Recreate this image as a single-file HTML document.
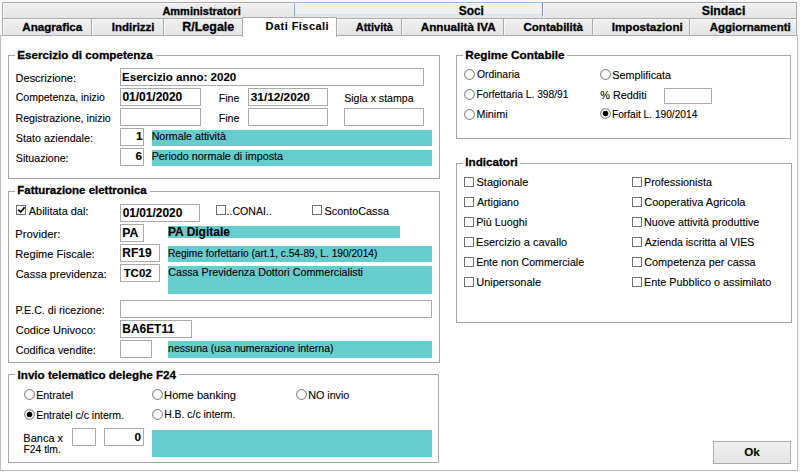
<!DOCTYPE html>
<html><head><meta charset="utf-8"><style>
html,body{margin:0;padding:0}
body{width:800px;height:472px;position:relative;overflow:hidden;background:#f8f8f8;font-family:"Liberation Sans",sans-serif;color:#000}
body>div, body>svg{position:absolute}
.t{position:absolute;white-space:nowrap;line-height:14px;font-family:"Liberation Sans",sans-serif}
.h{-webkit-text-stroke:0.3px #000}
.b{-webkit-text-stroke:0.1px #000}
.r{-webkit-text-stroke:0.1px #000}
</style></head><body>
<div style="left:0px;top:35px;width:798px;height:436px;box-sizing:border-box;border:1px solid #bdbdbd;background:#fff"></div>
<div style="left:2px;top:2px;width:293px;height:17px;box-sizing:border-box;border:1px solid #acacac;background:linear-gradient(#f0f0f0,#e5e5e5);box-shadow:inset 1px 1px 0 #f8f8f8"></div>
<div style="left:542px;top:2px;width:255px;height:17px;box-sizing:border-box;border:1px solid #acacac;background:linear-gradient(#f0f0f0,#e5e5e5);box-shadow:inset 1px 1px 0 #f8f8f8"></div>
<div style="left:294px;top:2px;width:249px;height:16px;box-sizing:border-box;border:1px solid #8fbfee;border-left-color:#7eb4ea;border-right-color:#8a8ad6;border-bottom:3px solid #e6e6e6;background:#efefef;box-shadow:inset 0 1px 0 #fff, inset 0 -1px 0 #cfe5f9"></div>
<div style="left:2px;top:18px;width:90px;height:18px;box-sizing:border-box;border:1px solid #acacac;background:linear-gradient(#f0f0f0,#e5e5e5);box-shadow:inset 1px 1px 0 #f8f8f8"></div>
<div style="left:91px;top:18px;width:73px;height:18px;box-sizing:border-box;border:1px solid #acacac;background:linear-gradient(#f0f0f0,#e5e5e5);box-shadow:inset 1px 1px 0 #f8f8f8"></div>
<div style="left:163px;top:18px;width:80px;height:18px;box-sizing:border-box;border:1px solid #acacac;background:linear-gradient(#f0f0f0,#e5e5e5);box-shadow:inset 1px 1px 0 #f8f8f8"></div>
<div style="left:336px;top:18px;width:66px;height:18px;box-sizing:border-box;border:1px solid #acacac;background:linear-gradient(#f0f0f0,#e5e5e5);box-shadow:inset 1px 1px 0 #f8f8f8"></div>
<div style="left:401px;top:18px;width:103px;height:18px;box-sizing:border-box;border:1px solid #acacac;background:linear-gradient(#f0f0f0,#e5e5e5);box-shadow:inset 1px 1px 0 #f8f8f8"></div>
<div style="left:503px;top:18px;width:90px;height:18px;box-sizing:border-box;border:1px solid #acacac;background:linear-gradient(#f0f0f0,#e5e5e5);box-shadow:inset 1px 1px 0 #f8f8f8"></div>
<div style="left:592px;top:18px;width:98px;height:18px;box-sizing:border-box;border:1px solid #acacac;background:linear-gradient(#f0f0f0,#e5e5e5);box-shadow:inset 1px 1px 0 #f8f8f8"></div>
<div style="left:689px;top:18px;width:108px;height:18px;box-sizing:border-box;border:1px solid #acacac;background:linear-gradient(#f0f0f0,#e5e5e5);box-shadow:inset 1px 1px 0 #f8f8f8"></div>
<div style="left:242px;top:17px;width:95px;height:20px;box-sizing:border-box;border:1px solid #acacac;border-bottom:none;background:#fff"></div>
<div style="left:8px;top:55px;width:432px;height:124px;box-sizing:border-box;border:1px solid #a8a8a8"></div>
<div style="left:15px;top:54px;width:141px;height:3px;background:#fff"></div>
<div style="left:120px;top:68px;width:304px;height:18px;box-sizing:border-box;border:1px solid #ababab;background:#fff"></div>
<div style="left:120px;top:88px;width:81px;height:18px;box-sizing:border-box;border:1px solid #ababab;background:#fff"></div>
<div style="left:248px;top:88px;width:80px;height:18px;box-sizing:border-box;border:1px solid #ababab;background:#fff"></div>
<div style="left:120px;top:108px;width:81px;height:18px;box-sizing:border-box;border:1px solid #ababab;background:#fff"></div>
<div style="left:248px;top:108px;width:80px;height:18px;box-sizing:border-box;border:1px solid #ababab;background:#fff"></div>
<div style="left:344px;top:108px;width:80px;height:18px;box-sizing:border-box;border:1px solid #ababab;background:#fff"></div>
<div style="left:120px;top:128px;width:24px;height:18px;box-sizing:border-box;border:1px solid #ababab;background:#fff"></div>
<div style="left:152px;top:130px;width:280px;height:16px;background:#66cccc"></div>
<div style="left:120px;top:148px;width:24px;height:18px;box-sizing:border-box;border:1px solid #ababab;background:#fff"></div>
<div style="left:152px;top:150px;width:280px;height:16px;background:#66cccc"></div>
<div style="left:8px;top:191px;width:432px;height:172px;box-sizing:border-box;border:1px solid #a8a8a8"></div>
<div style="left:15px;top:190px;width:135px;height:3px;background:#fff"></div>
<div style="left:16px;top:205px;width:10px;height:10px;box-sizing:border-box;border:1px solid #707070;background:#fff"><svg width="11" height="11" style="position:absolute;left:-1px;top:-1px"><path d="M2.3 4.6 L4.8 7.0 L8.6 2.3" stroke="#000" stroke-width="1.7" fill="none"/></svg></div>
<div style="left:120px;top:204px;width:80px;height:18px;box-sizing:border-box;border:1px solid #ababab;background:#fff"></div>
<div style="left:216px;top:205px;width:10px;height:10px;box-sizing:border-box;border:1px solid #707070;background:#fff"></div>
<div style="left:312px;top:205px;width:10px;height:10px;box-sizing:border-box;border:1px solid #707070;background:#fff"></div>
<div style="left:120px;top:224px;width:24px;height:18px;box-sizing:border-box;border:1px solid #ababab;background:#fff"></div>
<div style="left:168px;top:226px;width:232px;height:12px;background:#66cccc"></div>
<div style="left:120px;top:244px;width:40px;height:18px;box-sizing:border-box;border:1px solid #ababab;background:#fff"></div>
<div style="left:168px;top:246px;width:264px;height:16px;background:#66cccc"></div>
<div style="left:120px;top:264px;width:40px;height:18px;box-sizing:border-box;border:1px solid #ababab;background:#fff"></div>
<div style="left:168px;top:266px;width:264px;height:28px;background:#66cccc"></div>
<div style="left:120px;top:300px;width:312px;height:18px;box-sizing:border-box;border:1px solid #ababab;background:#fff"></div>
<div style="left:120px;top:320px;width:72px;height:18px;box-sizing:border-box;border:1px solid #ababab;background:#fff"></div>
<div style="left:120px;top:340px;width:32px;height:18px;box-sizing:border-box;border:1px solid #ababab;background:#fff"></div>
<div style="left:168px;top:341px;width:264px;height:17px;background:#66cccc"></div>
<div style="left:8px;top:374px;width:431px;height:89px;box-sizing:border-box;border:1px solid #a8a8a8"></div>
<div style="left:15px;top:373px;width:164px;height:3px;background:#fff"></div>
<svg style="left:24px;top:389px;position:absolute" width="11" height="11"><circle cx="5.5" cy="5.5" r="4.9" stroke="#6e6e6e" stroke-width="1" fill="#fff"/></svg>
<svg style="left:152px;top:389px;position:absolute" width="11" height="11"><circle cx="5.5" cy="5.5" r="4.9" stroke="#6e6e6e" stroke-width="1" fill="#fff"/></svg>
<svg style="left:296px;top:389px;position:absolute" width="11" height="11"><circle cx="5.5" cy="5.5" r="4.9" stroke="#6e6e6e" stroke-width="1" fill="#fff"/></svg>
<svg style="left:24px;top:409px;position:absolute" width="11" height="11"><circle cx="5.5" cy="5.5" r="4.9" stroke="#6e6e6e" stroke-width="1" fill="#fff"/><circle cx="5.5" cy="5.5" r="2.8" fill="#000"/></svg>
<svg style="left:152px;top:409px;position:absolute" width="11" height="11"><circle cx="5.5" cy="5.5" r="4.9" stroke="#6e6e6e" stroke-width="1" fill="#fff"/></svg>
<div style="left:72px;top:428px;width:24px;height:18px;box-sizing:border-box;border:1px solid #ababab;background:#fff"></div>
<div style="left:104px;top:428px;width:40px;height:18px;box-sizing:border-box;border:1px solid #ababab;background:#fff"></div>
<div style="left:152px;top:430px;width:280px;height:27px;background:#66cccc"></div>
<div style="left:456px;top:55px;width:335px;height:84px;box-sizing:border-box;border:1px solid #a8a8a8"></div>
<div style="left:463px;top:54px;width:104px;height:3px;background:#fff"></div>
<svg style="left:464px;top:69px;position:absolute" width="11" height="11"><circle cx="5.5" cy="5.5" r="4.9" stroke="#6e6e6e" stroke-width="1" fill="#fff"/></svg>
<svg style="left:600px;top:69px;position:absolute" width="11" height="11"><circle cx="5.5" cy="5.5" r="4.9" stroke="#6e6e6e" stroke-width="1" fill="#fff"/></svg>
<svg style="left:464px;top:89px;position:absolute" width="11" height="11"><circle cx="5.5" cy="5.5" r="4.9" stroke="#6e6e6e" stroke-width="1" fill="#fff"/></svg>
<div style="left:664px;top:88px;width:48px;height:16px;box-sizing:border-box;border:1px solid #ababab;background:#fff"></div>
<svg style="left:464px;top:109px;position:absolute" width="11" height="11"><circle cx="5.5" cy="5.5" r="4.9" stroke="#6e6e6e" stroke-width="1" fill="#fff"/></svg>
<svg style="left:600px;top:108px;position:absolute" width="11" height="11"><circle cx="5.5" cy="5.5" r="4.9" stroke="#6e6e6e" stroke-width="1" fill="#fff"/><circle cx="5.5" cy="5.5" r="2.8" fill="#000"/></svg>
<div style="left:456px;top:163px;width:336px;height:160px;box-sizing:border-box;border:1px solid #a8a8a8"></div>
<div style="left:463px;top:162px;width:57px;height:3px;background:#fff"></div>
<div style="left:464px;top:177px;width:10px;height:10px;box-sizing:border-box;border:1px solid #707070;background:#fff"></div>
<div style="left:632px;top:177px;width:10px;height:10px;box-sizing:border-box;border:1px solid #707070;background:#fff"></div>
<div style="left:464px;top:197px;width:10px;height:10px;box-sizing:border-box;border:1px solid #707070;background:#fff"></div>
<div style="left:632px;top:197px;width:10px;height:10px;box-sizing:border-box;border:1px solid #707070;background:#fff"></div>
<div style="left:464px;top:217px;width:10px;height:10px;box-sizing:border-box;border:1px solid #707070;background:#fff"></div>
<div style="left:632px;top:217px;width:10px;height:10px;box-sizing:border-box;border:1px solid #707070;background:#fff"></div>
<div style="left:464px;top:237px;width:10px;height:10px;box-sizing:border-box;border:1px solid #707070;background:#fff"></div>
<div style="left:632px;top:237px;width:10px;height:10px;box-sizing:border-box;border:1px solid #707070;background:#fff"></div>
<div style="left:464px;top:257px;width:10px;height:10px;box-sizing:border-box;border:1px solid #707070;background:#fff"></div>
<div style="left:632px;top:257px;width:10px;height:10px;box-sizing:border-box;border:1px solid #707070;background:#fff"></div>
<div style="left:464px;top:277px;width:10px;height:10px;box-sizing:border-box;border:1px solid #707070;background:#fff"></div>
<div style="left:632px;top:277px;width:10px;height:10px;box-sizing:border-box;border:1px solid #707070;background:#fff"></div>
<div style="left:713px;top:441px;width:78px;height:23px;box-sizing:border-box;border:1px solid #adadad;background:linear-gradient(#f0f0f0,#e5e5e5)"></div>
<div class="t h" style="left:162.38px;top:4px;font-weight:bold;font-size:11.02px;letter-spacing:0px">Amministratori</div>
<div class="t h" style="left:701.75px;top:4px;font-weight:bold;font-size:12.25px;letter-spacing:0px">Sindaci</div>
<div class="t h" style="left:458.76px;top:4px;font-weight:bold;font-size:11.86px;letter-spacing:0px">Soci</div>
<div class="t h" style="left:22.27px;top:20px;font-weight:bold;font-size:11.62px;letter-spacing:0px">Anagrafica</div>
<div class="t h" style="left:111.81px;top:20px;font-weight:bold;font-size:11.48px;letter-spacing:0px">Indirizzi</div>
<div class="t h" style="left:182.25px;top:20px;font-weight:bold;font-size:12.49px;letter-spacing:0px">R/Legale</div>
<div class="t h" style="left:355.78px;top:20px;font-weight:bold;font-size:10.97px;letter-spacing:0px">Attività</div>
<div class="t h" style="left:420.77px;top:20px;font-weight:bold;font-size:11.67px;letter-spacing:0px">Annualità IVA</div>
<div class="t h" style="left:523.54px;top:20px;font-weight:bold;font-size:11.50px;letter-spacing:0px">Contabilità</div>
<div class="t h" style="left:611.80px;top:20px;font-weight:bold;font-size:11.62px;letter-spacing:0px">Impostazioni</div>
<div class="t h" style="left:709.77px;top:20px;font-weight:bold;font-size:11.48px;letter-spacing:0px">Aggiornamenti</div>
<div class="t b" style="left:265.59px;top:19px;font-weight:bold;font-size:11.00px;letter-spacing:0.45px">Dati Fiscali</div>
<div class="t h" style="left:17.30px;top:48px;font-weight:bold;font-size:11.67px;letter-spacing:0px">Esercizio di competenza</div>
<div class="t r" style="left:15.62px;top:71px;font-weight:normal;font-size:10.97px;letter-spacing:0px">Descrizione:</div>
<div class="t b" style="left:122.06px;top:70px;font-weight:bold;font-size:11.56px;letter-spacing:0px">Esercizio anno: 2020</div>
<div class="t r" style="left:15.78px;top:91px;font-weight:normal;font-size:10.49px;letter-spacing:0px">Competenza, inizio</div>
<div class="t b" style="left:122.39px;top:90px;font-weight:bold;font-size:11.98px;letter-spacing:0px">01/01/2020</div>
<div class="t r" style="left:218.65px;top:91px;font-weight:normal;font-size:10.66px;letter-spacing:0px">Fine</div>
<div class="t b" style="left:250.76px;top:90px;font-weight:bold;font-size:11.82px;letter-spacing:0px">31/12/2020</div>
<div class="t r" style="left:344.18px;top:91px;font-weight:normal;font-size:10.58px;letter-spacing:0px">Sigla x stampa</div>
<div class="t r" style="left:15.45px;top:111px;font-weight:normal;font-size:10.67px;letter-spacing:0px">Registrazione, inizio</div>
<div class="t r" style="left:218.65px;top:111px;font-weight:normal;font-size:10.66px;letter-spacing:0px">Fine</div>
<div class="t r" style="left:15.87px;top:131px;font-weight:normal;font-size:10.75px;letter-spacing:0px">Stato aziendale:</div>
<div class="t b" style="left:136.04px;top:129px;font-weight:bold;font-size:11.80px;letter-spacing:0px">1</div>
<div class="t r" style="left:151.64px;top:129px;font-weight:normal;font-size:10.70px;letter-spacing:0px">Normale attività</div>
<div class="t r" style="left:15.87px;top:151px;font-weight:normal;font-size:10.66px;letter-spacing:0px">Situazione:</div>
<div class="t b" style="left:135.55px;top:149px;font-weight:bold;font-size:11.80px;letter-spacing:0px">6</div>
<div class="t r" style="left:151.64px;top:149px;font-weight:normal;font-size:10.80px;letter-spacing:0px">Periodo normale di imposta</div>
<div class="t h" style="left:17.31px;top:183px;font-weight:bold;font-size:11.47px;letter-spacing:0px">Fatturazione elettronica</div>
<div class="t r" style="left:28.75px;top:204px;font-weight:normal;font-size:10.96px;letter-spacing:0px">Abilitata dal:</div>
<div class="t b" style="left:122.64px;top:206px;font-weight:bold;font-size:11.95px;letter-spacing:0px">01/01/2020</div>
<div class="t r" style="left:226.55px;top:204px;font-weight:normal;font-size:10.61px;letter-spacing:0px">..CONAI..</div>
<div class="t r" style="left:324.57px;top:204px;font-weight:normal;font-size:10.83px;letter-spacing:0px">ScontoCassa</div>
<div class="t r" style="left:15.35px;top:227px;font-weight:normal;font-size:11.28px;letter-spacing:0px">Provider:</div>
<div class="t b" style="left:122.27px;top:226px;font-weight:bold;font-size:12.20px;letter-spacing:0px">PA</div>
<div class="t b" style="left:168.03px;top:225px;font-weight:bold;font-size:11.97px;letter-spacing:0px">PA Digitale</div>
<div class="t r" style="left:15.36px;top:247px;font-weight:normal;font-size:11.07px;letter-spacing:0px">Regime Fiscale:</div>
<div class="t b" style="left:122.28px;top:246px;font-weight:bold;font-size:12.03px;letter-spacing:0px">RF19</div>
<div class="t r" style="left:167.94px;top:247px;font-weight:normal;font-size:10.17px;letter-spacing:0px">Regime forfettario (art.1, c.54-89, L. 190/2014)</div>
<div class="t r" style="left:15.70px;top:267px;font-weight:normal;font-size:10.99px;letter-spacing:0px">Cassa previdenza:</div>
<div class="t b" style="left:123.64px;top:266px;font-weight:bold;font-size:11.46px;letter-spacing:0px">TC02</div>
<div class="t r" style="left:168.21px;top:265px;font-weight:normal;font-size:10.72px;letter-spacing:0px">Cassa Previdenza Dottori Commercialisti</div>
<div class="t r" style="left:15.40px;top:303px;font-weight:normal;font-size:10.66px;letter-spacing:0px">P.E.C. di ricezione:</div>
<div class="t r" style="left:15.70px;top:323px;font-weight:normal;font-size:11.02px;letter-spacing:0px">Codice Univoco:</div>
<div class="t b" style="left:122.28px;top:322px;font-weight:bold;font-size:11.94px;letter-spacing:0px">BA6ET11</div>
<div class="t r" style="left:15.71px;top:343px;font-weight:normal;font-size:10.85px;letter-spacing:0px">Codifica vendite:</div>
<div class="t r" style="left:168.12px;top:341px;font-weight:normal;font-size:10.53px;letter-spacing:0px">nessuna (usa numerazione interna)</div>
<div class="t h" style="left:17.55px;top:368px;font-weight:bold;font-size:11.65px;letter-spacing:0px">Invio telematico deleghe F24</div>
<div class="t r" style="left:36.14px;top:388px;font-weight:normal;font-size:10.74px;letter-spacing:0px">Entratel</div>
<div class="t r" style="left:164.11px;top:388px;font-weight:normal;font-size:11.14px;letter-spacing:0px">Home banking</div>
<div class="t r" style="left:308.14px;top:388px;font-weight:normal;font-size:10.76px;letter-spacing:0px">NO invio</div>
<div class="t r" style="left:36.16px;top:408px;font-weight:normal;font-size:10.56px;letter-spacing:0px">Entratel c/c interm.</div>
<div class="t r" style="left:164.17px;top:408px;font-weight:normal;font-size:10.43px;letter-spacing:0px">H.B. c/c interm.</div>
<div class="t r" style="left:23.37px;top:431px;font-weight:normal;font-size:11.00px;letter-spacing:0px">Banca x</div>
<div class="t r" style="left:23.42px;top:443px;font-weight:normal;font-size:10.38px;letter-spacing:0px">F24 tlm.</div>
<div class="t b" style="left:134.45px;top:430px;font-weight:bold;font-size:11.80px;letter-spacing:0px">0</div>
<div class="t h" style="left:465.29px;top:48px;font-weight:bold;font-size:11.77px;letter-spacing:0px">Regime Contabile</div>
<div class="t r" style="left:476.88px;top:68px;font-weight:normal;font-size:10.43px;letter-spacing:0px">Ordinaria</div>
<div class="t r" style="left:612.32px;top:68px;font-weight:normal;font-size:10.81px;letter-spacing:0px">Semplificata</div>
<div class="t r" style="left:476.48px;top:88px;font-weight:normal;font-size:10.21px;letter-spacing:0px">Forfettaria L. 398/91</div>
<div class="t r" style="left:600.27px;top:88px;font-weight:normal;font-size:10.84px;letter-spacing:0px">% Redditi</div>
<div class="t r" style="left:476.43px;top:107px;font-weight:normal;font-size:10.81px;letter-spacing:0px">Minimi</div>
<div class="t r" style="left:611.93px;top:108px;font-weight:normal;font-size:10.19px;letter-spacing:0px">Forfait L. 190/2014</div>
<div class="t h" style="left:465.30px;top:155px;font-weight:bold;font-size:11.66px;letter-spacing:0px">Indicatori</div>
<div class="t r" style="left:476.56px;top:175px;font-weight:normal;font-size:10.97px;letter-spacing:0px">Stagionale</div>
<div class="t r" style="left:643.93px;top:175px;font-weight:normal;font-size:10.83px;letter-spacing:0px">Professionista</div>
<div class="t r" style="left:477.00px;top:195px;font-weight:normal;font-size:10.61px;letter-spacing:0px">Artigiano</div>
<div class="t r" style="left:644.25px;top:195px;font-weight:normal;font-size:10.98px;letter-spacing:0px">Cooperativa Agricola</div>
<div class="t r" style="left:476.14px;top:215px;font-weight:normal;font-size:10.80px;letter-spacing:0px">Più Luoghi</div>
<div class="t r" style="left:643.94px;top:215px;font-weight:normal;font-size:10.75px;letter-spacing:0px">Nuove attività produttive</div>
<div class="t r" style="left:476.12px;top:235px;font-weight:normal;font-size:11.01px;letter-spacing:0px">Esercizio a cavallo</div>
<div class="t r" style="left:644.80px;top:235px;font-weight:normal;font-size:10.54px;letter-spacing:0px">Azienda iscritta al VIES</div>
<div class="t r" style="left:476.15px;top:255px;font-weight:normal;font-size:10.61px;letter-spacing:0px">Ente non Commerciale</div>
<div class="t r" style="left:644.26px;top:255px;font-weight:normal;font-size:10.83px;letter-spacing:0px">Competenza per cassa</div>
<div class="t r" style="left:476.23px;top:275px;font-weight:normal;font-size:11.03px;letter-spacing:0px">Unipersonale</div>
<div class="t r" style="left:643.93px;top:275px;font-weight:normal;font-size:10.87px;letter-spacing:0px">Ente Pubblico o assimilato</div>
<div class="t b" style="left:744.13px;top:445px;font-weight:bold;font-size:11.67px;letter-spacing:0px">Ok</div>
</body></html>
